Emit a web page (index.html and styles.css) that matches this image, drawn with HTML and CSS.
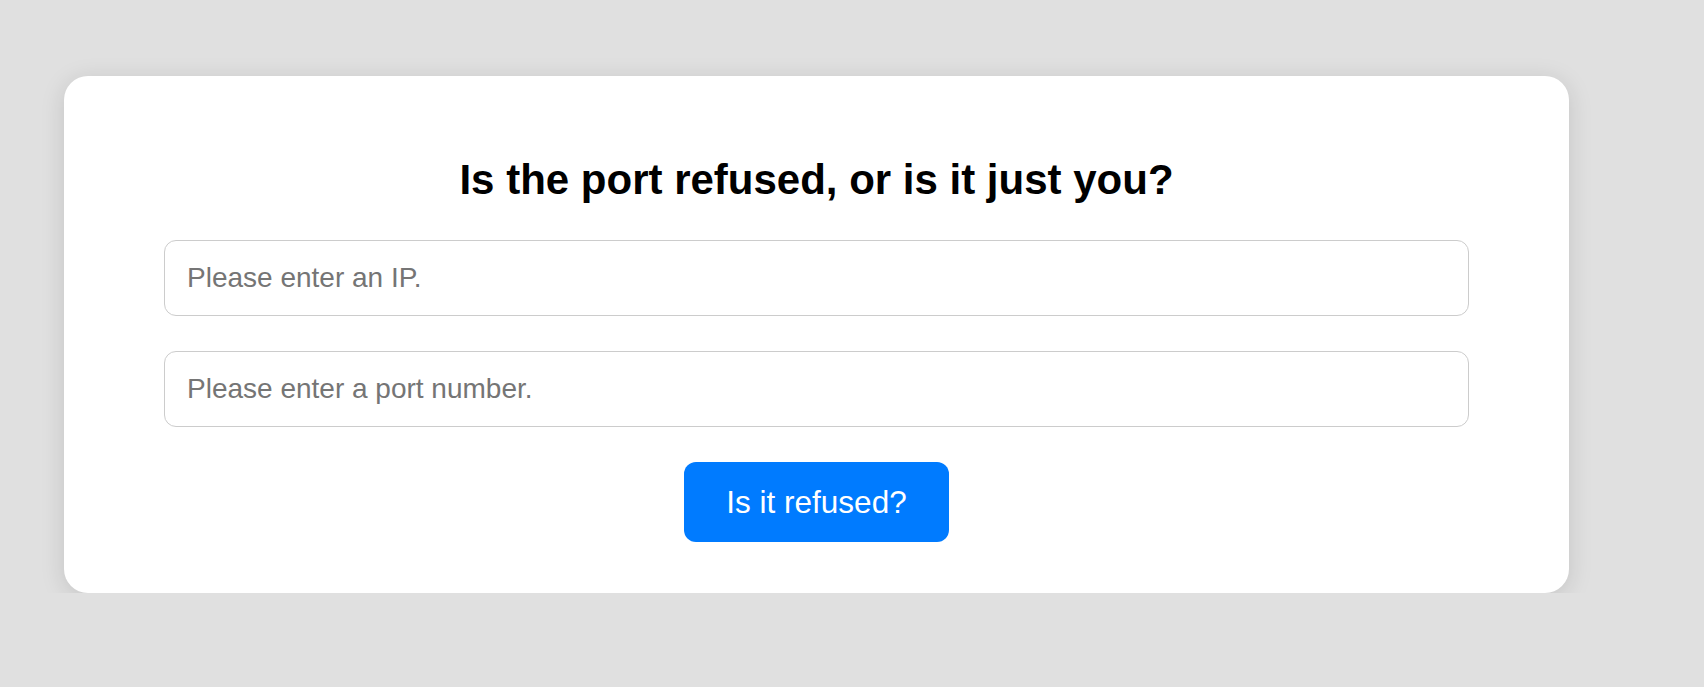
FILE: index.html
```html
<!DOCTYPE html>
<html>
<head>
  <title>Port Checker</title>
  <link rel="stylesheet" href="styles.css">
</head>
<body>
<div class="page">
  <div class="card">
    <h1>Is the port refused, or is it just you?</h1>
    <form class="check-form">
      <input type="text" id="ip" placeholder="Please enter an IP.">
      <input type="text" id="port" placeholder="Please enter a port number.">
      <button type="button" id="check">Is it refused?</button>
    </form>
  </div>
</div>
</body>
</html>
```

FILE: styles.css
```css
* {
  box-sizing: border-box;
}
body {
  font-family: "Liberation Sans", Arial, sans-serif;
  background-color: #e0e0e0;
  margin: 0;
  padding: 0;
}
.page {
  padding: 76px 0 0 64px;
}
.card {
  width: 1505px;
  background-color: #fff;
  border-radius: 24px;
  box-shadow: 0 4px 24px rgba(0, 0, 0, 0.13);
  padding: 50px 100px 51px;
  text-align: center;
}
h1 {
  font-size: 42px;
  font-weight: bold;
  color: #000;
  margin: 30px 0 36px;
}
.check-form {
  display: flex;
  flex-direction: column;
  align-items: center;
  gap: 35px;
}
.check-form input {
  width: 100%;
  font-family: inherit;
  font-size: 28px;
  padding: 21px 22px;
  border: 1px solid #ccc;
  border-radius: 12px;
  outline: none;
}
.check-form input::placeholder {
  color: #757575;
}
#check {
  font-family: inherit;
  font-size: 31.5px;
  color: #fff;
  background-color: #007bff;
  border: none;
  border-radius: 12px;
  padding: 21.5px 42.5px;
  cursor: pointer;
}
```
